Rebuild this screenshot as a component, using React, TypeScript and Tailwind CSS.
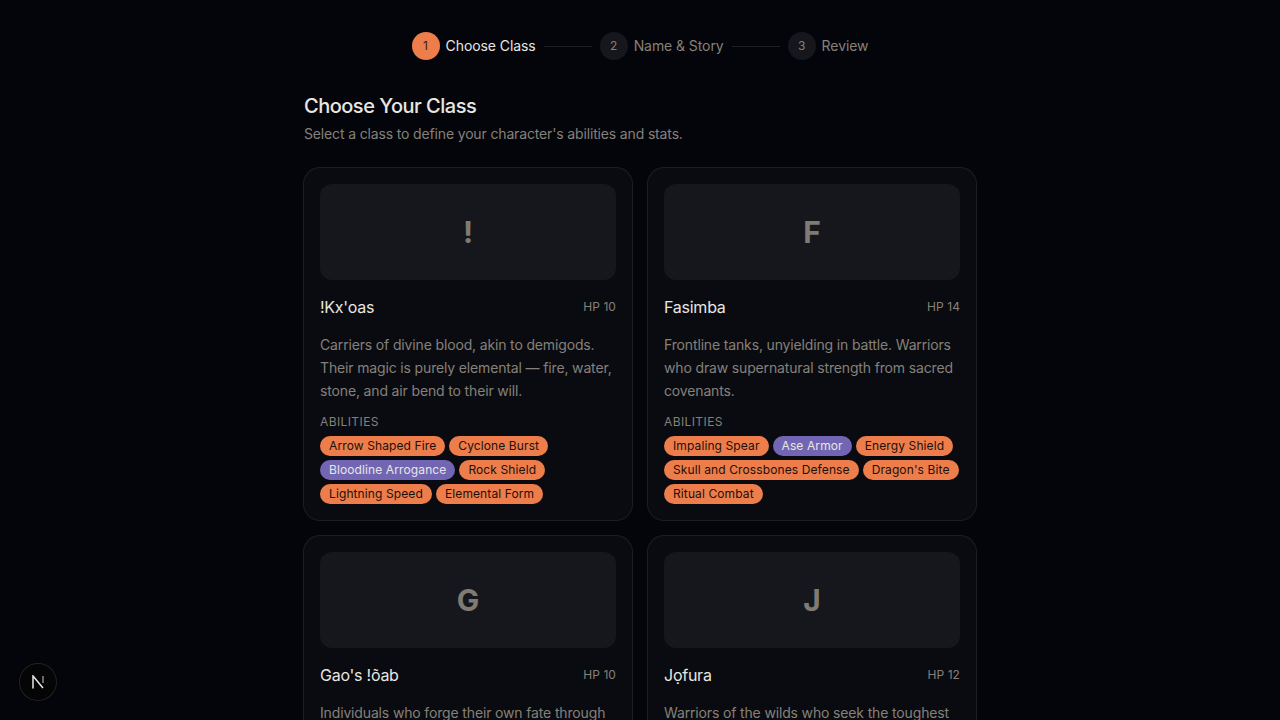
const CLASSES = [
  {
    letter: "!",
    name: "!Kx'oas",
    hp: 10,
    description:
      "Carriers of divine blood, akin to demigods. Their magic is purely elemental — fire, water, stone, and air bend to their will.",
    abilities: [
      { name: "Arrow Shaped Fire" },
      { name: "Cyclone Burst" },
      { name: "Bloodline Arrogance", passive: true },
      { name: "Rock Shield" },
      { name: "Lightning Speed" },
      { name: "Elemental Form" },
    ],
  },
  {
    letter: "F",
    name: "Fasimba",
    hp: 14,
    description:
      "Frontline tanks, unyielding in battle. Warriors who draw supernatural strength from sacred covenants.",
    abilities: [
      { name: "Impaling Spear" },
      { name: "Ase Armor", passive: true },
      { name: "Energy Shield" },
      { name: "Skull and Crossbones Defense" },
      { name: "Dragon's Bite" },
      { name: "Ritual Combat" },
    ],
  },
  {
    letter: "G",
    name: "Gao's !õab",
    hp: 10,
    description: "Individuals who forge their own fate through",
    abilities: [],
  },
  {
    letter: "J",
    name: "Jọfura",
    hp: 12,
    description: "Warriors of the wilds who seek the toughest",
    abilities: [],
  },
];

const STEPS = ["Choose Class", "Name & Story", "Review"];

function Stepper() {
  return (
    <div className="flex items-center justify-center gap-2">
      {STEPS.map((step, i) => (
        <div key={step} className="flex items-center gap-2">
          <div className="flex items-center gap-1.5">
            <div
              className={
                i === 0
                  ? "flex h-7 w-7 items-center justify-center rounded-full bg-[#ed7d4b] text-xs text-[#3a2012]"
                  : "flex h-7 w-7 items-center justify-center rounded-full bg-[#15171c] text-xs text-[#85817a]"
              }
            >
              {i + 1}
            </div>
            <span
              className={
                i === 0
                  ? "text-sm tracking-[-0.08px] text-[#e8e6e1]"
                  : "text-sm tracking-[-0.08px] text-[#85817a]"
              }
            >
              {step}
            </span>
          </div>
          {i < STEPS.length - 1 && <div className="h-px w-12 bg-[#1e2025]" />}
        </div>
      ))}
    </div>
  );
}

function ClassCard({ item }: { item: (typeof CLASSES)[number] }) {
  return (
    <div className="rounded-2xl bg-[#0a0b10] p-4 ring-1 ring-[#1c1e23]">
      <div className="flex h-24 items-center justify-center rounded-xl bg-[#15171c] text-3xl font-bold text-[#7f7b72]">
        {item.letter}
      </div>
      <div className="mt-[15px] flex items-center justify-between">
        <h3 className="text-base tracking-[-0.25px] text-[#e8e6e1]">{item.name}</h3>
        <span className="text-xs tracking-[0.07px] text-[#85817a]">HP {item.hp}</span>
      </div>
      <p className="mt-[14px] text-sm leading-[23px] tracking-[-0.15px] text-[#85817a]">{item.description}</p>
      {item.abilities.length > 0 && (
        <div className="mt-3">
          <div className="text-xs tracking-[0.4px] text-[#85817a] uppercase">Abilities</div>
          <div className="mt-1.5 flex flex-wrap gap-1">
            {item.abilities.map((a) => (
              <span
                key={a.name}
                className={
                  a.passive
                    ? "rounded-full bg-[#7266b4] px-[9px] py-0.5 text-xs tracking-[0.11px] text-[#e8e6e1]"
                    : "rounded-full bg-[#ed7d4b] px-[9px] py-0.5 text-xs tracking-[0.11px] text-[#1c100a]"
                }
              >
                {a.name}
              </span>
            ))}
          </div>
        </div>
      )}
    </div>
  );
}

export default function App() {
  return (
    <div className="h-screen overflow-hidden bg-[#04050a] font-['Inter',sans-serif]">
      <div className="mx-auto max-w-2xl pt-8">
        <Stepper />
        <h1 className="mt-8 text-xl font-medium tracking-[-0.5px] text-[#e8e6e1]">Choose Your Class</h1>
        <p className="mt-1 text-sm tracking-[-0.15px] text-[#85817a]">
          Select a class to define your character's abilities and stats.
        </p>
        <div className="mt-6 grid grid-cols-2 gap-4">
          {CLASSES.map((c) => (
            <ClassCard key={c.name} item={c} />
          ))}
        </div>
      </div>

      {/* dev indicator */}
      <div className="fixed bottom-5 left-5 flex h-9 w-9 items-center justify-center rounded-full bg-[#050505] ring-1 ring-[#232323]">
        <svg width="13" height="14" viewBox="0 0 13 14" fill="none">
          <path d="M1 13.5V1L11 13" stroke="#e8e8e8" strokeWidth="1.5" />
          <path d="M11 1V8" stroke="#8a8a8a" strokeWidth="1.5" />
        </svg>
      </div>
    </div>
  );
}
